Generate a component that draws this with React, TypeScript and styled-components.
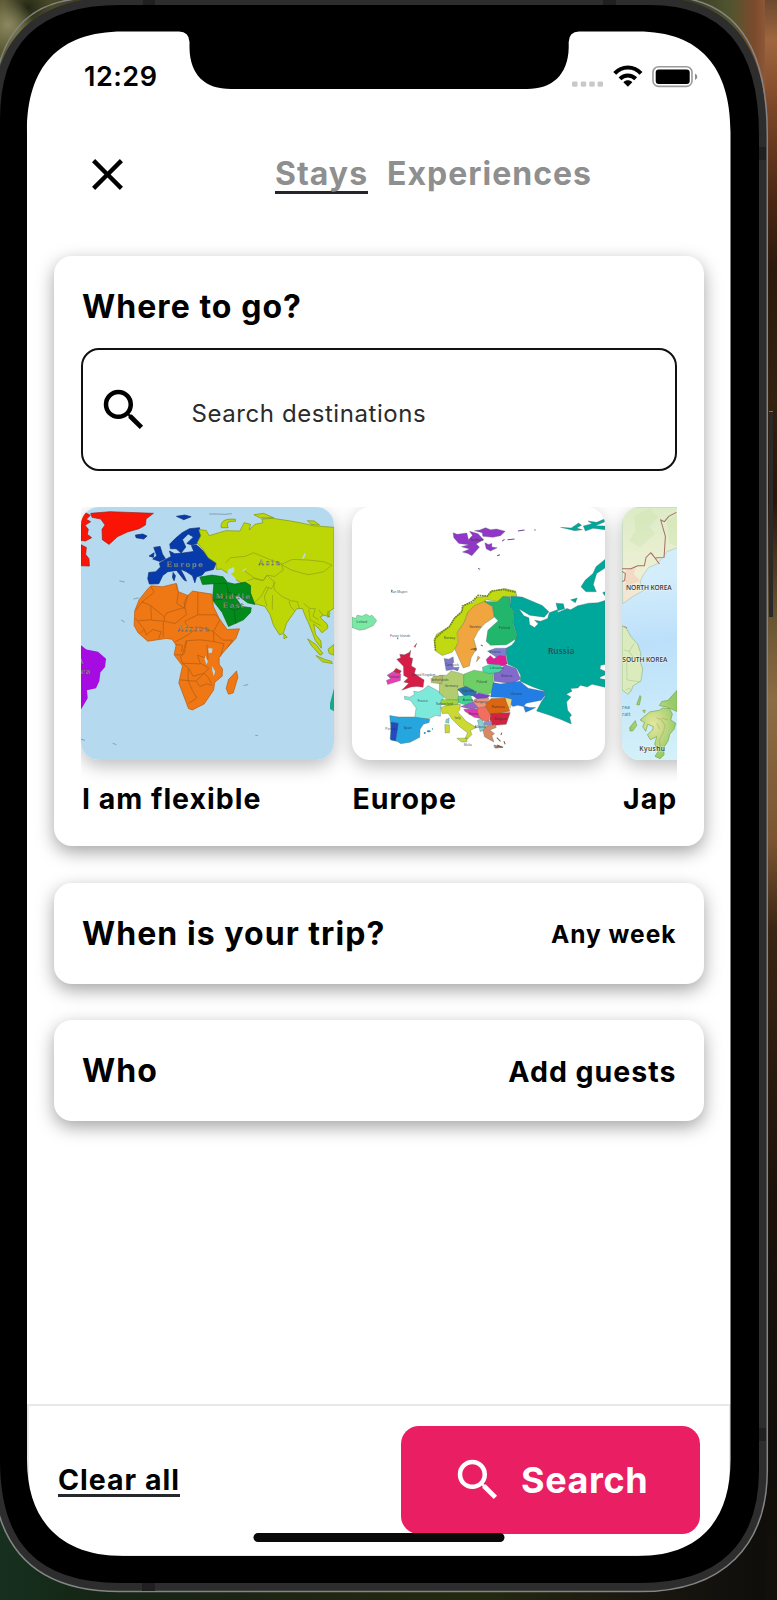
import React from "react";
import styled, { createGlobalStyle } from "styled-components";
import { MdClose, MdSearch } from "react-icons/md";

const GlobalStyle = createGlobalStyle`
  *, *::before, *::after { box-sizing: border-box; }
  html, body { margin: 0; padding: 0; background: #1a1d12; }
  button, input { font: inherit; }
`;

const Desktop = styled.main`
  position: relative;
  width: 777px;
  height: 1600px;
  overflow: hidden;
  font-family: Inter, "Liberation Sans", sans-serif;
  color: #000;
  background:
    linear-gradient(180deg, #6b4a30 0, #a0653e 40px, #7a4527 110px, #4a2612 200px, #2b190b 270px, #33200f 400px, #2a150a 500px, #6a5532 620px, #8b6c45 700px, #7a5431 840px, #3a2412 930px, #1b110a 1200px, #100e0a 1450px, #13100b 1600px) right / 12px 100% no-repeat,
    linear-gradient(90deg, #16301f 0, #152616 90px, #1c2413 260px, #23290f 480px, #1a1710 640px, #0e0d0b 777px) bottom / 100% 200px no-repeat,
    radial-gradient(circle at 8px 25px, #8b8760 0, transparent 26px),
    radial-gradient(circle at 28px 8px, #232714 0, transparent 24px),
    linear-gradient(90deg, #5c5b35 0, #3d3c22 90px, #3b3b25 690px, #50552f 730px, #7d4a2c 755px, #9d6845 777px);
`;

const DeviceArt = styled.svg`
  position: absolute;
  inset: 0;
  z-index: 2;
  pointer-events: none;
`;

const Screen = styled.div`
  display: flex;
  flex-direction: column;
  width: 704px;
  height: 1526px;
  margin: 31px 0 0 27px;
  background: #fff;
`;

const StatusBar = styled.div`
  position: relative;
  z-index: 3;
  display: flex;
  align-items: center;
  justify-content: space-between;
  height: 90px;
  padding: 0 31px 0 57px;
`;

const Clock = styled.time`
  font-size: 27px;
  font-weight: 600;
  letter-spacing: 0.5px;
`;

const Header = styled.header`
  display: flex;
  align-items: center;
  height: 53px;
  margin-top: 27px;
  padding-left: 54px;
`;

const IconButton = styled.button`
  display: flex;
  padding: 0;
  border: 0;
  background: none;
  color: #000;
`;

const Tabs = styled.nav`
  display: flex;
  gap: 19px;
  margin-left: 141px;
`;

const Tab = styled.a<{ $active?: boolean }>`
  height: 39px;
  border-bottom: 3px solid ${(p) => (p.$active ? "#25252c" : "transparent")};
  color: #8f8f8f;
  font-size: 32px;
  font-weight: 650;
  line-height: 38px;
  letter-spacing: 1px;
`;

const Cards = styled.section`
  display: flex;
  flex-direction: column;
  gap: 36.5px;
  margin: 54.5px 27.5px 0 27px;
`;

const Card = styled.article`
  padding: 0 27px;
  border-radius: 18px;
  background: #fff;
  box-shadow: 0 6px 18px rgba(0, 0, 0, 0.36);
`;

const PlacesCard = styled(Card)`
  height: 590.5px;
  padding-top: 29px;
`;

const RowCard = styled(Card)`
  display: flex;
  align-items: center;
  justify-content: space-between;
  height: 101px;
`;

const Title = styled.h2`
  margin: 0;
  padding: 1px 0 0 1px;
  font-size: 32px;
  font-weight: 650;
  line-height: 42px;
  letter-spacing: 1.05px;
`;

const Value = styled.span<{ $size: number }>`
  padding-top: 1px;
  font-size: ${(p) => p.$size}px;
  font-weight: 650;
  letter-spacing: 1px;
`;

const SearchField = styled.label`
  display: flex;
  align-items: center;
  height: 123px;
  margin-top: 20.5px;
  padding-left: 14px;
  border: 2px solid #111;
  border-radius: 18px;
`;

const Placeholder = styled.span`
  margin: 8px 0 0 40.5px;
  color: #2b2b2b;
  font-size: 24px;
  letter-spacing: 0.57px;
`;

const Carousel = styled.div`
  display: flex;
  gap: 17.5px;
  height: 310px;
  margin-top: 36px;
  overflow: hidden;
`;

const Place = styled.figure`
  flex: 0 0 253px;
  margin: 0;
`;

const MapFrame = styled.div`
  height: 253px;
  border-radius: 18px;
  overflow: hidden;
  background: #fff;
  box-shadow: 0 6px 18px rgba(0, 0, 0, 0.26);
  svg { display: block; }
`;

const PlaceName = styled.figcaption`
  margin-top: 21px;
  padding-left: 1px;
  font-size: 28.5px;
  font-weight: 650;
  line-height: 36px;
  letter-spacing: 1px;
  white-space: nowrap;
`;

const Footer = styled.footer`
  display: flex;
  align-items: flex-start;
  justify-content: space-between;
  height: 153px;
  margin-top: auto;
  padding: 20px 29px 0;
  border: 2px solid #e8e8e8;
`;

const ClearAll = styled.a`
  height: 36px;
  margin-top: 35px;
  border-bottom: 3px solid #25292c;
  font-size: 28.5px;
  font-weight: 650;
  line-height: 38px;
  letter-spacing: 1px;
`;

const SearchButton = styled.button`
  display: flex;
  align-items: center;
  gap: 16px;
  width: 299px;
  height: 108px;
  padding: 0 0 1px 50px;
  border: 0;
  border-radius: 18px;
  background: #ea1e63;
  color: #fff;
  font-size: 36px;
  font-weight: 650;
  letter-spacing: 0.6px;
`;

const StatusIcons = () => (
  <svg width="130" height="30" viewBox="570 60 130 30">
    {[572, 580.7, 589.2, 597.5].map((x) => (
      <rect key={x} x={x} y="80.500" width="5.6" height="5.2" rx="1.4" fill="#c9c9c9" />
    ))}
    <g fill="none" stroke="#000" strokeWidth="4">
      <path d="M614.7 72.3C622 64.4 633.8 64.4 641 72.3" />
      <path d="M620 77.8C624.300 73.500 631.300 73.500 635.700 77.800" />
    </g>
    <path d="M623.400 81.200C626 78.700 629.700 78.700 632.300 81.200L627.900 85.700Z" />
    <rect x="653" y="65.800" width="39" height="19.600" rx="5.500" fill="#fff" stroke="#9b9b9b" strokeWidth="1.600" />
    <rect x="655.700" y="68.500" width="34" height="14.500" rx="3" />
    <path d="M695 72.500C698 74 698 77.500 695 79Z" fill="#8c8c8c" />
  </svg>
);

const Device = () => (
  <DeviceArt width="777" height="1600" viewBox="0 0 777 1600">
    <path
      fill="#000"
      fillRule="evenodd"
      d="M120 2H640C725 2 763 45 763 135V1470C763 1545 725 1587 640 1587H120C35 1587 -3 1545 -3 1470V120C-3 42 35 2 120 2ZM123 31.500C58 31.500 27 67 27 132V1460C27 1520 60 1556 123 1556H638C700 1556 730.500 1520 730.500 1460V132C730.500 67 700 31.500 638 31.500H579Q569 31.500 568.700 42V48C568 75 552 89 527 89H231C205 89 190 75 189.500 48V42Q189 31.500 179 31.500Z"
    />
    <path fill="none" stroke="#2d2d2d" strokeWidth="8" d="M120 1H650C725 1 763 45 763 135V1470C763 1545 722 1587 640 1587H120C35 1587 -4 1545 -4 1460V120C-4 42 35 1 120 1Z" />
    <path fill="none" stroke="#858585" strokeWidth="1.500" d="M93 -2C30 -2 -6 32 -7 112M660 -4C727 -4 767.300 35 767.300 135V1470C767.300 1545 724 1591.600 640 1591.600H120C35 1591.600 -8 1548 -8 1460" />
    <path fill="#202020" d="M143 0H155V5H143ZM603 0H616V5H603ZM759 147H766V160H759ZM759 1428H766V1441H759ZM142 1583H155V1591H142Z" />
    <path fill="#292929" d="M769 413H773V617H769Z" />
    <path stroke="#777" d="M769 411.500H773" />
    <rect x="253.500" y="1533" width="251" height="9" rx="4.500" fill="#090909" />
  </DeviceArt>
);

const WorldMap = () => (
  <svg width="253" height="253" viewBox="33 36 758 758">
    <path fill="#b5daf0" d="M33 36H791V795H33Z" />
    <g fill="#fa1405" stroke="#a31c14" strokeWidth="2">
      <path d="M62 55L120 50L250 55L228 72L226 90L207 101L172 111L142 125L117 148L97 134L96 103L105 90L92 72L66 67Z" />
      <path d="M33 61L48 54L61 61L49 73L62 80L45 91L55 103L52 118L65 128L46 138L33 136ZM33 149L49 157L47 178L57 191L58 213L33 212Z" />
    </g>
    <g fill="#073bac" stroke="#122d6d" strokeWidth="2">
      <path d="M236 232L257 230L271 216L268 204L285 194L303 184L298 168L314 176L338 174L371 169L364 152L378 149L389 158L400 169L414 187L438 204L430 223L405 229L396 240L379 246L374 263L367 242L349 230L331 222L343 244L349 258L342 255L319 226L293 230L278 241L266 266L238 267L233 251Z" />
      <path d="M301 161L299 147L316 130L336 113L358 101L388 98L392 125L386 143L365 150L350 145L370 126L354 117L337 134L347 156L333 174L318 161ZM251 157L270 154L277 177L286 191L269 199L248 192L260 182ZM237 183L252 173L250 187ZM196 120L218 117L231 123L221 132L198 128ZM319 64L344 60L363 65L341 74ZM309 232L316 242L312 257L307 247Z" />
    </g>
    <path fill="#bdd706" stroke="#7c9105" strokeWidth="2" d="M386 104L408 106L417 122L436 116L467 107L509 108L522 83L541 88L537 105L554 88L578 83L575 72L608 70L661 78L694 84L729 92L791 97V339L778 348L771 358L779 365L760 360L749 366L760 377L770 386L773 398L755 413L745 400L730 387L736 418L752 438L753 459L735 436L721 399L714 382L706 365L696 340L679 341L649 384L639 415L628 419L610 391L599 357L584 334L555 326L538 311L531 272L503 258L478 239L454 222L438 223V204L414 188L398 162L381 144L392 122Z" />
    <g fill="#bdd706" stroke="#7c9105" strokeWidth="2">
      <path d="M453 98C450 76 469 70 496 73L496 79Q462 76 474 98ZM551 59L580 55L610 68L570 69ZM711 77L732 78L748 90L722 88ZM641 416L651 426L641 431ZM712 431L737 448L758 475L749 480L722 449ZM737 481L764 493L783 498L786 505L756 500ZM773 462L791 448V480L777 475ZM773 348L779 355L773 367Z" />
    </g>
    <path fill="#b5daf0" d="M474 223L492 216L492 230L482 237L495 248L502 269L487 260L471 236ZM695 190L703 173L706 178L700 191ZM516 227L528 217L523 230Z" />
    <path fill="none" stroke="#8d9f1b" strokeWidth="2" d="M467 203L480 188L525 184L550 173L600 194L633 206L639 225L613 244L590 240L578 257L557 252L521 226M633 208L666 193L715 195L760 200L785 210L760 230L714 239L663 225ZM532 257L555 249L579 256L591 241L615 263L603 281L588 275L572 305L551 324M610 262L612 284L635 304L660 316L682 320L687 340M595 276L582 306L590 334M607 300L606 344M656 318L661 334L672 346M700 325L719 340L735 340L728 363L745 374M745 344L759 362M715 341L720 375L751 391" />
    <path fill="#028a1b" stroke="#066b18" strokeWidth="2" d="M389 246L425 240L459 245L472 262L494 267L525 261L541 271L541 294L554 328L532 323L505 302L495 306L515 334L543 338L541 352L520 374L475 394L456 352L427 315L431 266L397 268Z" />
    <path fill="none" stroke="#0b5f1b" strokeWidth="2" d="M430 266L468 264L475 293L457 312L430 315M475 291L507 303M465 331L492 346L497 386M492 346L514 337" />
    <path fill="#ef7714" stroke="#b65a0c" strokeWidth="2" d="M234 280L243 272L277 275L318 265L323 289L353 301L367 288L425 297L430 334L447 370L471 403L508 401L497 430L472 457L447 486L447 507L457 521L456 543L434 561L430 585L402 626L367 644L355 640L326 563L337 512L312 479L318 449L305 432L288 430L233 438L204 413L192 391L194 347L207 314ZM499 527L503 546L489 593L475 597L468 580L475 553Z" />
    <g fill="none" stroke="#ad5b12" strokeWidth="2">
      <path d="M242 273L252 292L215 321L198 345M215 320L241 331L283 365L290 353L343 337L353 301M319 265L325 290L320 325L344 340M353 301L342 323L349 358L315 385L284 379L281 366M383 293L383 359L344 378L350 391M383 359L438 359L449 374L430 409L385 395L354 419L315 440M242 332L244 374L203 377L194 370M203 378L222 402L229 419L248 403L273 410L265 432M245 375L280 378L279 425M222 403L212 414M430 409L431 439L389 434L348 437L337 479L315 479M314 447L337 451L334 470M430 410L458 435L487 435L470 460M431 439L461 446L451 485M350 437L343 473L331 485L337 504L391 506L382 480L414 491L410 449M337 504L355 519L369 543L402 534L416 519L393 505M330 554L377 558L402 534M354 520L354 556L367 586L380 608L355 625M378 558L389 574L408 566L426 570M402 534L413 545L424 565" />
    </g>
    <path fill="#b5daf0" d="M414 459L427 460L425 473L416 474ZM406 482L413 499L409 509L403 491ZM426 512L435 529L431 543L426 526Z" />
    <path fill="#a60be1" d="M33 450L49 463L84 470L108 491L105 515L91 532L88 557L78 579L51 585L53 609L33 643Z" />
    <path fill="#18a68d" d="M791 579L779 625V641L791 648Z" />
    <g fill="none" stroke="#6b8594" strokeWidth="2">
      <path d="M417 57H440L464 58L485 56M190 312L206 308M148 257L164 261M153 374L164 381M33 732L45 735M128 744L139 748M555 720L563 721M520 571L534 568" />
    </g>
    <g fill="#d6d3bc" stroke="#444e4c" strokeWidth=".8" fontFamily="DejaVu Serif, serif" fontSize="22">
      <text x="289" y="215" textLength="108">Europe</text>
      <text x="565" y="211" textLength="64">Asia</text>
      <text x="437" y="312" textLength="102">Middle</text>
      <text x="458" y="339" textLength="62">East</text>
      <text x="323" y="408" textLength="92">Africa</text>
      <text x="25" y="507">A</text>
      <text x="33" y="536" letterSpacing="3">ca</text>
    </g>
  </svg>
);

const europeRegions: [string, string][] = [
  ["#00a89c", "M511 303L545 306L605 331L625 350L611 366L567 360L535 341L550 362L565 368L567 388L582 397L593 386L582 375L600 378L621 370L626 353L650 344L652 352L679 340L690 344L711 332L744 324L771 323L793 316V508L780 510L778 521L793 528V539L779 545L777 550L793 553V576L754 567L740 575L719 570L712 578L690 580L694 588L677 597L691 605L678 620L681 645L693 660L687 666L692 686L661 673L625 659L588 647L602 620L613 604L611 587L577 575L539 558L540 540L529 520L502 507L494 461L513 450L522 440L528 418L518 383L521 350L508 335ZM793 193L766 215L757 235L734 255L721 275L736 290L767 290L758 268L768 235L793 219ZM646 324L668 326L672 341L652 347ZM690 314L710 309L704 323ZM786 293L793 290V302Z"],
  ["#00a89c", "M660 97L692 99L714 84L723 91L708 99L725 104L702 107ZM728 93L754 86L742 78L768 82L793 71V80L764 92L793 93V104L757 100L734 108Z"],
  ["#9137c8", "M338 113L350 118L379 114L384 134L396 121L387 109L413 116L429 134L407 147L417 156L394 182L382 175L366 171L387 162L363 155L385 149L355 145L340 128ZM402 107L418 105L435 98L450 104L468 102L494 109L480 122L457 127L427 124L425 113ZM433 143L444 148L454 145V156L470 158L450 168L437 161Z"],
  ["#c1d910", "M305 481L286 468L282 438L287 418L327 394L341 370L363 350L372 329L399 322L407 308L440 303L457 288L493 280L525 288L529 303L488 305L471 319L438 314L409 335L382 352L371 382L350 411L351 450L335 471Z"],
  ["#f1a53e", "M368 518L343 462L353 443L351 411L371 382L383 350L401 332L434 318L456 335L461 366L432 386L412 409L400 432L408 460L392 487L387 512ZM412 483L419 487L408 500Z"],
  ["#22b56c", "M431 319L471 320L487 304L509 306L508 334L521 349L518 384L530 428L498 449L450 450L437 438L442 405L473 377L461 365L456 334Z"],
  ["#7be8a6", "M35 366L47 370L50 360L65 363L78 357L88 363L95 360L109 376L99 391L75 402L58 405L35 397Z"],
  ["#d51d47", "M178 477L192 479L206 472L211 465L208 486L217 490L213 512L226 520L222 535L237 545L251 554L248 576L230 574L212 575L184 585L205 564L190 560L203 548L190 541L189 513L176 500L169 492L181 488ZM167 519L183 527L177 536L158 530ZM221 454L229 444L224 457Z"],
  ["#ea3eb4", "M156 530L181 536L180 556L142 568L138 556L151 550L140 540Z"],
  ["#7de9db", "M192 603L208 606L222 598L220 588L234 590L248 584L263 571L298 590L311 596L300 639L300 663L285 661L267 670L245 671L223 666L227 638L210 615L193 612Z"],
  ["#26a6de", "M148 661L175 665L220 665L268 672L266 682L249 687L239 702L238 726L209 741L181 745L172 739L149 731L152 704Z"],
  ["#224ac7", "M152 680L174 684L166 737L151 734Z"],
  ["#b2cd70", "M297 540L318 540L332 527L356 533L369 538L376 573L351 587L357 615L322 615L297 594Z"],
  ["#7d77ca", "M311 490L325 492L338 485L340 501L335 507L340 517L356 516L352 527L340 523L317 526Z"],
  ["#6dcf66", "M370 537L400 525L431 530L457 535L461 587L443 598L405 590L369 571Z"],
  ["#846acb", "M459 533L475 527L494 508L527 520L540 551L514 566L461 558Z"],
  ["#807dce", "M441 468L465 459H499L496 483L468 486Z"],
  ["#e21c97", "M437 493L449 481L460 491L475 481L496 483L500 506L487 512L441 506Z"],
  ["#46d9a2", "M426 516L450 507L479 509L486 522L475 531L444 535L427 528Z"],
  ["#237de5", "M458 562L480 566L538 558L563 579L612 589L613 601L602 615L557 624L550 632L567 637L585 637L571 644L555 651L549 634L531 630L517 634L492 607L450 605Z"],
  ["#2b76ae", "M351 582L376 573L409 590L405 600L374 605Z"],
  ["#40d593", "M353 604L389 599L398 618L378 630L353 622Z"],
  ["#7843ca", "M395 600L415 593L449 601L438 610L410 611Z"],
  ["#ec937f", "M393 625L404 611L445 608L438 635L410 640Z"],
  ["#db6510", "M439 622L452 610L496 608L508 648L449 659L432 642Z"],
  ["#f2d472", "M493 607L514 612L510 637L504 637Z"],
  ["#d5233f", "M450 655L509 652L497 687L455 691L448 672Z"],
  ["#ccd931", "M301 637L337 625L360 628L358 644L352 650L377 678L408 697L390 705L394 718L382 730L374 730L381 712L356 693L335 672L323 654L305 655ZM313 688L327 689V712L314 713ZM349 729L380 728L379 740L363 740Z"],
  ["#9d61cb", "M361 634L397 620L413 637L397 643L379 639Z"],
  ["#e233b2", "M370 642L418 641L421 670L401 666L373 648Z"],
  ["#f46e60", "M411 639L435 634L449 656L445 678L424 676L412 658Z"],
  ["#8bced0", "M411 675L423 671L438 701L419 709Z"],
  ["#8f91cd", "M431 679L454 677L452 690H431Z"],
  ["#d78a61", "M427 705L438 692L465 688L467 697L448 704L462 715L454 721L460 740L447 733L432 724ZM460 749L488 755L465 759Z"],
  ["#b7ba69", "M278 543L307 541L304 566L272 562Z"],
  ["#9cd63d", "M299 626L303 613L354 614L352 627L320 631Z"],
  ["#85d4c7", "M317 673L326 668L325 684L315 682Z"],
];

const europeLabels: [number, number, string][] = [
  [48, 384, "Iceland"], [310, 432, "Norway"], [386, 398, "Sweden"], [475, 403, "Finland"],
  [152, 294, "Jan Mayen"], [149, 427, "Faroe Islands"], [214, 543, "United Kingdom"], [146, 548, "Ireland"],
  [231, 621, "France"], [189, 702, "Spain"], [135, 703, "Portugal"], [312, 575, "Germany"],
  [408, 562, "Poland"], [482, 546, "Belarus"], [510, 600, "Ukraine"], [453, 638, "Romania"],
  [461, 675, "Bulgaria"], [342, 670, "Italy"], [364, 590, "Czechia"], [367, 616, "Austria"],
  [401, 622, "Hungary"], [315, 512, "Denmark"], [447, 473, "Estonia"], [448, 520, "Lithuania"],
  [384, 660, "Bosnia"], [459, 757, "Crete"], [389, 137, "Svalbard"], [270, 558, "Netherlands"],
  [286, 629, "Switzerland"], [402, 698, "Albania"], [370, 752, "Malta"],
];

const EuropeMap = () => (
  <svg width="253" height="253" viewBox="35 36 758 758">
    {europeRegions.map(([fill, d]) => (
      <path key={d} d={d} fill={fill} stroke="#4d6964" strokeOpacity=".65" strokeWidth="1.500" />
    ))}
    <path fill="none" stroke="#6f8710" strokeWidth="5" strokeDasharray="5 2" d="M285 466L282 432L303 412L327 394L343 368L365 349L366 333L394 320L413 301L440 303L452 288L488 283L525 291" />
    <path fill="none" stroke="#684894" strokeWidth="3" d="M532 108L552 105M485 138L492 133M501 134L522 132M470 182L478 179M581 105H585M413 220L419 223" />
    <g fill="#218fb6">
      <circle cx="253" cy="713" r="3" /><ellipse cx="265" cy="708" rx="6" ry="3" /><circle cx="276" cy="701" r="2" />
    </g>
    <g fill="none" stroke="#7b5c43" strokeWidth="3">
      <path d="M155 284L153 290M172 427V432M391 463L407 459M405 468L408 460M421 449L427 453M399 462L408 465M469 727L480 738M484 712L481 719M490 738L494 747M470 749L487 757" />
    </g>
    <g fill="#24383f" fillOpacity=".85" fontFamily="Liberation Sans, sans-serif" fontSize="10">
      {europeLabels.map(([x, y, name]) => <text key={name} x={x} y={y}>{name}</text>)}
    </g>
    <text x="622" y="475" textLength="79" fill="#123f42" stroke="#5aa7a4" strokeWidth=".6" fontFamily="Noto Sans, sans-serif" fontSize="25" fontWeight="600">Russia</text>
  </svg>
);

const JapanMap = () => (
  <svg width="253" height="253" viewBox="65 36 758 758">
    <defs>
      <linearGradient id="sea" gradientUnits="userSpaceOnUse" x1="130" y1="250" x2="190" y2="795">
        <stop stopColor="#d3edfb" />
        <stop offset=".35" stopColor="#bce0fa" />
        <stop offset="1" stopColor="#d3f1f8" />
      </linearGradient>
      <linearGradient id="land" x2="0" y2="1">
        <stop stopColor="#dcebc6" />
        <stop offset=".65" stopColor="#edf0d4" />
        <stop offset="1" stopColor="#f4e3d4" />
      </linearGradient>
      <radialGradient id="island">
        <stop stopColor="#e6e79d" />
        <stop offset="1" stopColor="#97ca68" />
      </radialGradient>
    </defs>
    <path fill="url(#sea)" d="M65 36H823V795H65Z" />
    <path fill="url(#land)" stroke="#9cbd9d" strokeWidth="1.500" d="M65 36H260V158L225 160L199 170L190 184L169 207L145 217L128 240L119 261L130 286L98 304L67 326Z" />
    <path fill="#cde4ad" fillOpacity=".4" d="M102 62L149 40L174 66L148 94L164 117L119 157L86 137L105 108ZM199 75L232 57V155L207 145Z" />
    <path fill="#f5cdb8" fillOpacity=".6" d="M75 227L107 211L101 238L119 257L87 270L76 296Z" />
    <path fill="none" stroke="#a66e65" strokeWidth="3" d="M65 221H92L112 212H132L137 187L151 173L164 189L191 187L195 124L181 75L192 80L205 64L228 52M153 174L177 207M65 229L75 235L73 256L65 259M66 393L78 397L72 415" />
    <path fill="#dcebbb" stroke="#8fb688" strokeWidth="2" d="M65 392L78 399L91 423L112 447L121 473L120 501L127 521L122 557L98 572L92 588L81 596L65 584Z" />
    <path fill="none" stroke="#a8caa0" strokeWidth="2" d="M101 446L86 469L98 486L79 500L80 554L120 560M70 464L89 469M75 585L87 578L91 586L83 598" />
    <g fill="url(#island)" stroke="#75a54b" strokeWidth="2">
      <path d="M119 601L122 605L117 629L109 628ZM88 697L105 676L109 691L97 707L89 707ZM127 645L135 645L132 653ZM119 674L148 650L177 645L187 638L207 640L216 656L211 674L226 684L221 702L208 717L203 737L190 757L191 779L179 790L164 783L174 767L163 747L169 724L150 733L141 718L157 704L159 694L142 687L136 708L127 694L133 682ZM177 631L184 619L203 615L230 585V649L199 635Z" />
    </g>
    <path fill="none" stroke="#ba9d59" strokeWidth="3" strokeOpacity=".5" d="M168 667L183 674L194 690L189 711L176 736L181 754M184 668L203 674M169 685L178 701" />
    <g fill="#373b3b" fontFamily="Open Sans, sans-serif" fontSize="20" fontWeight="600" stroke="#fff" strokeOpacity=".5" strokeWidth="3" paintOrder="stroke">
      <text x="77" y="285" textLength="137">NORTH KOREA</text>
      <text x="66" y="500" textLength="135">SOUTH KOREA</text>
      <text x="117" y="768" textLength="77">Kyushu</text>
    </g>
    <g fill="#4f95b0" fontFamily="Open Sans, sans-serif" fontSize="15" fontWeight="600"><text x="65" y="641">rea</text><text x="65" y="661">rait</text></g>
  </svg>
);

const places = [
  { name: "I am flexible", Map: WorldMap },
  { name: "Europe", Map: EuropeMap },
  { name: "Jap", Map: JapanMap },
];

export default function App() {
  return (
    <>
      <GlobalStyle />
      <Desktop>
        <Device />
        <Screen>
          <StatusBar>
            <Clock>12:29</Clock>
            <StatusIcons />
          </StatusBar>
          <Header>
            <IconButton aria-label="Close"><MdClose size={53} /></IconButton>
            <Tabs>
              <Tab $active>Stays</Tab>
              <Tab>Experiences</Tab>
            </Tabs>
          </Header>
          <Cards>
            <PlacesCard>
              <Title>Where to go?</Title>
              <SearchField>
                <MdSearch size={54} />
                <Placeholder>Search destinations</Placeholder>
              </SearchField>
              <Carousel>
                {places.map(({ name, Map }) => (
                  <Place key={name}>
                    <MapFrame><Map /></MapFrame>
                    <PlaceName>{name}</PlaceName>
                  </Place>
                ))}
              </Carousel>
            </PlacesCard>
            <RowCard>
              <Title>When is your trip?</Title>
              <Value $size={24.5}>Any week</Value>
            </RowCard>
            <RowCard>
              <Title>Who</Title>
              <Value $size={28.5}>Add guests</Value>
            </RowCard>
          </Cards>
          <Footer>
            <ClearAll>Clear all</ClearAll>
            <SearchButton><MdSearch size={54} />Search</SearchButton>
          </Footer>
        </Screen>
      </Desktop>
    </>
  );
}
